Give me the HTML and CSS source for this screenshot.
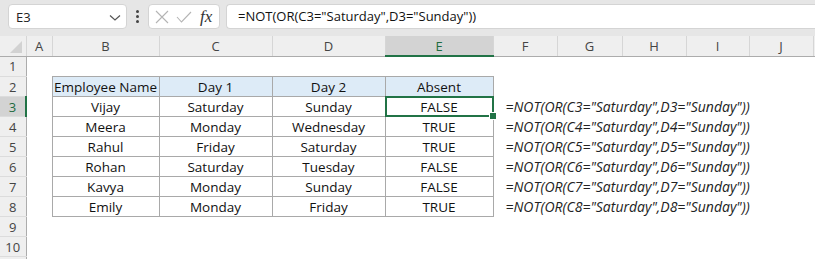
FILE: index.html
```html
<!DOCTYPE html>
<html>
<head>
<meta charset="utf-8">
<link rel="stylesheet" href="styles.css">
</head>
<body>
<div class="toolbar">
  <div class="namebox"><span>E3</span>
    <svg class="chev" width="12" height="8" viewBox="0 0 12 8"><path d="M1 1.5 L6 6 L11 1.5" fill="none" stroke="#555" stroke-width="1.2"/></svg>
  </div>
  <div class="dots"><i></i><i></i><i></i></div>
  <div class="fxbox">
    <svg width="14" height="14" viewBox="0 0 14 14"><path d="M1 1 L13 13 M13 1 L1 13" stroke="#b4b4b4" stroke-width="1.1" fill="none"/></svg>
    <svg width="16" height="12" viewBox="0 0 16 12"><path d="M1 6 L5.5 11 L15 1" stroke="#b4b4b4" stroke-width="1.1" fill="none"/></svg>
    <span class="fx">fx</span>
  </div>
  <div class="formula">=NOT(OR(C3="Saturday",D3="Sunday"))</div>
</div>
<table class="sheet">
  <colgroup>
    <col class="w-rh"><col class="w-a"><col class="w-b"><col class="w-c"><col class="w-d"><col class="w-e"><col class="w-f"><col class="w-g"><col class="w-h"><col class="w-i"><col class="w-j"><col class="w-k">
  </colgroup>
  <tr class="colhdr">
    <th class="corner"><span class="tri"></span></th><th>A</th><th>B</th><th>C</th><th>D</th><th class="sel">E</th><th>F</th><th>G</th><th>H</th><th>I</th><th>J</th><th></th>
  </tr>
  <tr><th class="rh">1</th><td></td><td></td><td></td><td></td><td></td><td></td><td></td><td></td><td></td><td></td><td></td></tr>
  <tr><th class="rh">2</th><td></td><td class="t hd">Employee Name</td><td class="t hd">Day 1</td><td class="t hd">Day 2</td><td class="t hd">Absent</td><td></td><td></td><td></td><td></td><td></td><td></td></tr>
  <tr><th class="rh rsel">3</th><td></td><td class="t">Vijay</td><td class="t">Saturday</td><td class="t">Sunday</td><td class="t active">FALSE<span class="handle"></span></td><td class="fm" colspan="5">=NOT(OR(C3="Saturday",D3="Sunday"))</td><td></td></tr>
  <tr><th class="rh">4</th><td></td><td class="t">Meera</td><td class="t">Monday</td><td class="t">Wednesday</td><td class="t">TRUE</td><td class="fm" colspan="5">=NOT(OR(C4="Saturday",D4="Sunday"))</td><td></td></tr>
  <tr><th class="rh">5</th><td></td><td class="t">Rahul</td><td class="t">Friday</td><td class="t">Saturday</td><td class="t">TRUE</td><td class="fm" colspan="5">=NOT(OR(C5="Saturday",D5="Sunday"))</td><td></td></tr>
  <tr><th class="rh">6</th><td></td><td class="t">Rohan</td><td class="t">Saturday</td><td class="t">Tuesday</td><td class="t">FALSE</td><td class="fm" colspan="5">=NOT(OR(C6="Saturday",D6="Sunday"))</td><td></td></tr>
  <tr><th class="rh">7</th><td></td><td class="t">Kavya</td><td class="t">Monday</td><td class="t">Sunday</td><td class="t">FALSE</td><td class="fm" colspan="5">=NOT(OR(C7="Saturday",D7="Sunday"))</td><td></td></tr>
  <tr><th class="rh">8</th><td></td><td class="t">Emily</td><td class="t">Monday</td><td class="t">Friday</td><td class="t">TRUE</td><td class="fm" colspan="5">=NOT(OR(C8="Saturday",D8="Sunday"))</td><td></td></tr>
  <tr><th class="rh">9</th><td></td><td></td><td></td><td></td><td></td><td></td><td></td><td></td><td></td><td></td><td></td></tr>
  <tr><th class="rh">10</th><td></td><td></td><td></td><td></td><td></td><td></td><td></td><td></td><td></td><td></td><td></td></tr>
  <tr><th class="rh"></th><td></td><td></td><td></td><td></td><td></td><td></td><td></td><td></td><td></td><td></td><td></td></tr>
</table>
</body>
</html>
```
FILE: styles.css
```css
html, body {
  margin: 0;
  padding: 0;
}
body {
  width: 815px;
  height: 259px;
  overflow: hidden;
  background: #fff;
  font-family: "Open Sans", sans-serif;
  color: #1f1f1f;
}
.toolbar {
  height: 36px;
  box-sizing: border-box;
  background: #e6e6e6;
  display: flex;
  align-items: flex-start;
  padding-top: 4px;
}
.namebox {
  margin-left: 8px;
  width: 119px;
  height: 25px;
  box-sizing: border-box;
  background: #fff;
  border: 1px solid #d4d4d4;
  border-radius: 4px;
  display: flex;
  align-items: center;
  justify-content: space-between;
  padding: 0 5px 0 7px;
  font-size: 13px;
  color: #222;
}
.chev {
  margin-top: 2px;
}
.dots {
  width: 21px;
  height: 25px;
  display: flex;
  flex-direction: column;
  align-items: center;
  justify-content: center;
  gap: 2px;
}
.dots i {
  display: block;
  width: 3px;
  height: 3px;
  border-radius: 50%;
  background: #444;
}
.fxbox {
  width: 72px;
  height: 25px;
  box-sizing: border-box;
  background: #fff;
  border: 1px solid #d4d4d4;
  border-radius: 4px;
  display: flex;
  align-items: center;
  padding-left: 6px;
  gap: 7px;
}
.fx {
  font-family: "Liberation Serif", serif;
  font-style: italic;
  font-size: 17px;
  color: #333;
  margin-left: 1px;
  line-height: 1;
}
.formula {
  flex: 1;
  margin-left: 6px;
  height: 25px;
  box-sizing: border-box;
  background: #fff;
  border: 1px solid #d4d4d4;
  border-right: none;
  border-radius: 4px 0 0 4px;
  padding-left: 11px;
  font-size: 13px;
  line-height: 23px;
  color: #111;
}
.sheet {
  border-collapse: collapse;
  table-layout: fixed;
  width: 843px;
}
.w-rh { width: 26px; }
.w-a { width: 26px; }
.w-b { width: 107px; }
.w-c { width: 113px; }
.w-d { width: 113px; }
.w-e { width: 108px; }
.w-f { width: 64px; }
.w-g { width: 65px; }
.w-h { width: 64px; }
.w-i { width: 63px; }
.w-j { width: 64px; }
.w-k { width: 30px; }
.sheet th, .sheet td {
  padding: 0;
  height: 19px;
  font-weight: normal;
  white-space: nowrap;
}
.colhdr th {
  height: 19px;
  background: #efefef;
  border-right: 1px solid #d6d6d6;
  border-bottom: 1px solid #acacac;
  font-size: 13px;
  color: #444;
  text-align: center;
  font-family: "Open Sans", sans-serif;
}
.colhdr th.sel {
  background: #d3d3d3;
  color: #1e6b41;
  border-bottom: 2px solid #217346;
}
.corner {
  position: relative;
}
.tri {
  position: absolute;
  right: 4px;
  bottom: 3px;
  width: 0;
  height: 0;
  border-left: 12px solid transparent;
  border-bottom: 12px solid #d2d2d2;
}
.rh {
  background: #efefef;
  border-right: 1px solid #acacac;
  border-bottom: 1px solid #dcdcdc;
  font-size: 13px;
  color: #444;
  text-align: center;
}
.rh.rsel {
  background: #d3d3d3;
  color: #1e6b41;
  border-right: 2px solid #217346;
}
.t {
  border: 1px solid #a9a9a9;
  text-align: center;
  font-size: 13.5px;
  color: #111;
}
.t.hd {
  background: #ddebf7;
}
.active {
  position: relative;
}
.active::after {
  content: "";
  position: absolute;
  left: -1px;
  top: -1px;
  right: -1px;
  bottom: -1px;
  border: 2px solid #217346;
}
.handle {
  position: absolute;
  right: -4px;
  bottom: -4px;
  width: 6px;
  height: 6px;
  background: #217346;
  border: 1px solid #fff;
  z-index: 2;
}
.sheet .fm {
  font-style: italic;
  font-size: 14px;
  color: #222;
  padding-left: 12px;
  text-align: left;
  overflow: visible;
}
```
